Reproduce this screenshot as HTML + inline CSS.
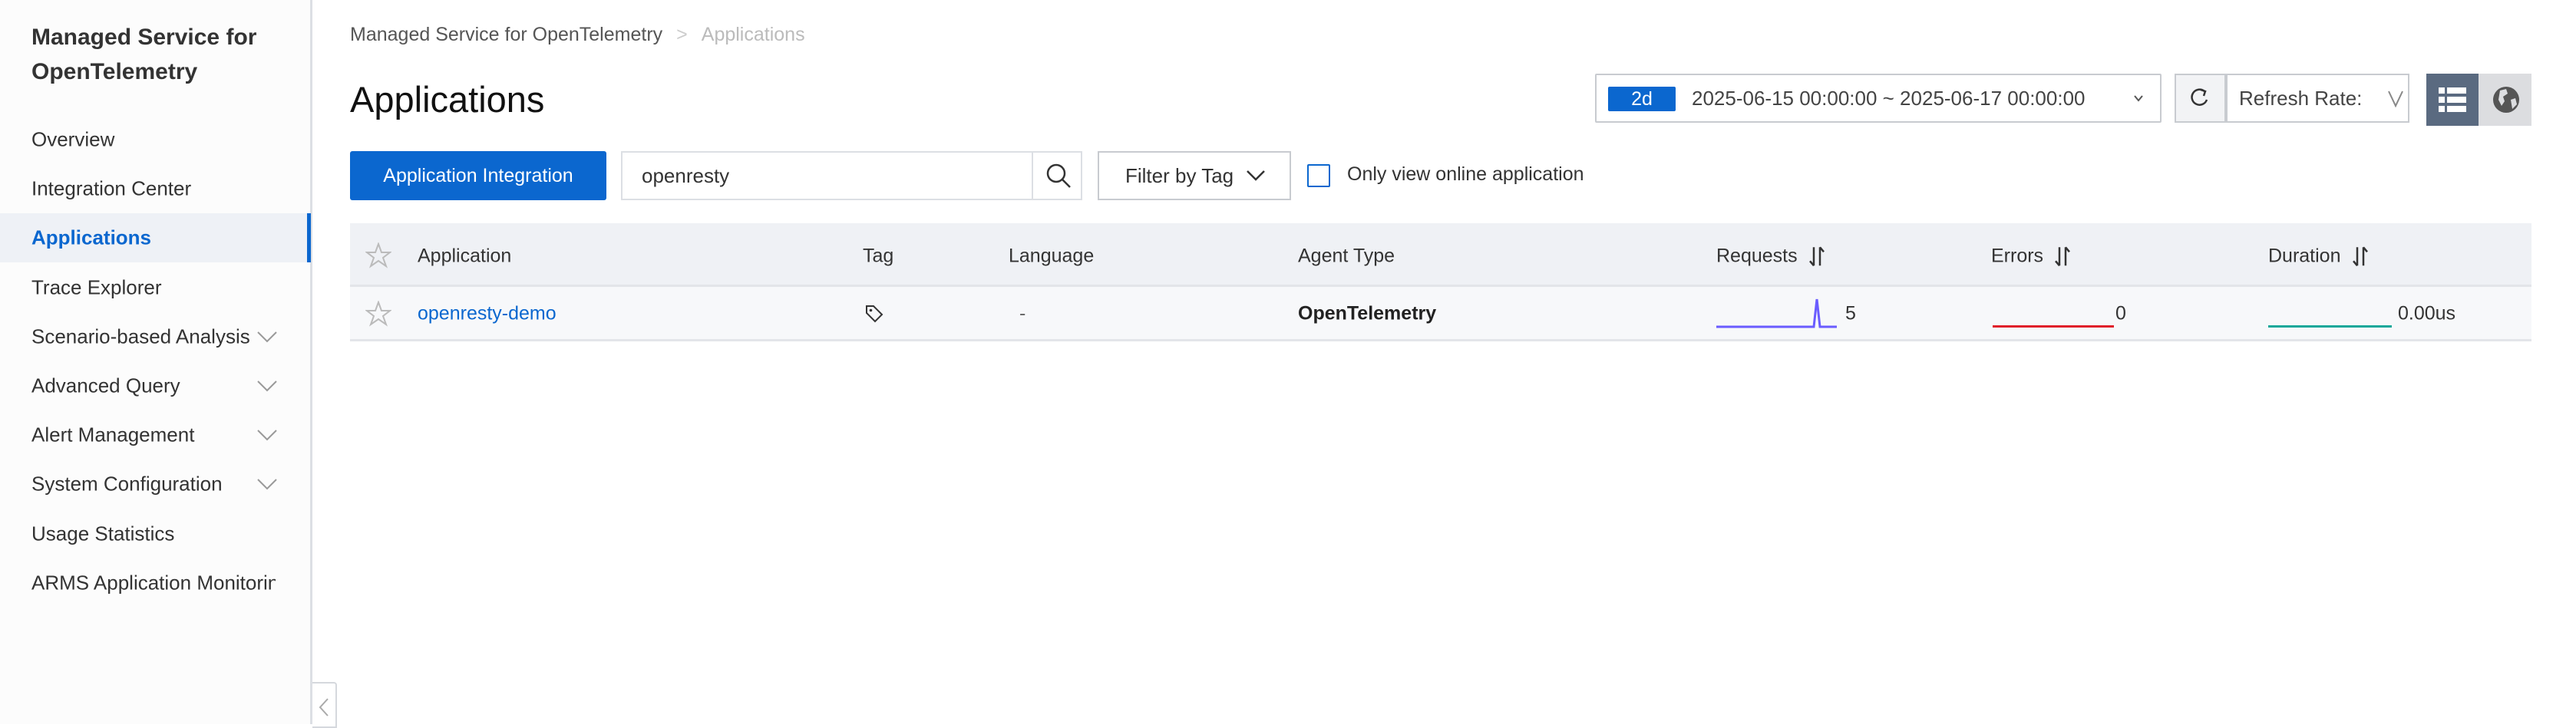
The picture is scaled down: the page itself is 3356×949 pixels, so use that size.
<!DOCTYPE html>
<html><head><meta charset="utf-8"><style>
*{box-sizing:border-box;margin:0;padding:0}
body{width:3356px;height:944px;overflow:hidden;background:#fff;font-family:"Liberation Sans",Arial,sans-serif;color:#333;position:relative}
.abs{position:absolute}
#side{left:0;top:0;width:407px;height:944px;background:#fcfcfc;border-right:3px solid #dcdfe4}
.ttl{left:41px;font-size:30px;font-weight:bold;color:#333;white-space:nowrap}
.mi{left:41px;font-size:26px;color:#333;white-space:nowrap;transform:translateY(-50%)}
.chev{left:333px;width:30px;height:18px}
.hd{font-size:25px;color:#333;transform:translateY(-50%);white-space:nowrap}
.sort{display:inline-block;margin-left:14px;vertical-align:middle}
</style></head><body>
<div id="side" class="abs"></div>
<div class="abs ttl" style="top:32px">Managed Service for</div>
<div class="abs ttl" style="top:77px">OpenTelemetry</div>
<div class="abs" style="left:0;top:278px;width:404px;height:64px;background:#eef1f6"></div>
<div class="abs" style="left:400px;top:278px;width:5px;height:64px;background:#0b67cf"></div>
<div class="abs mi" style="top:182px">Overview</div>
<div class="abs mi" style="top:246px">Integration Center</div>
<div class="abs mi" style="top:310px;color:#0b67cf;font-weight:bold">Applications</div>
<div class="abs mi" style="top:375px">Trace Explorer</div>
<div class="abs mi" style="top:439px">Scenario-based Analysis</div>
<div class="abs mi" style="top:503px">Advanced Query</div>
<div class="abs mi" style="top:567px">Alert Management</div>
<div class="abs mi" style="top:631px">System Configuration</div>
<div class="abs mi" style="top:696px">Usage Statistics</div>
<div class="abs mi" style="top:760px;width:318px;overflow:hidden">ARMS Application Monitoring</div>
<svg class="abs chev" style="top:430px" viewBox="0 0 30 18"><path d="M3 3 L15 15 L27 3" fill="none" stroke="#999" stroke-width="2"/></svg>
<svg class="abs chev" style="top:494px" viewBox="0 0 30 18"><path d="M3 3 L15 15 L27 3" fill="none" stroke="#999" stroke-width="2"/></svg>
<svg class="abs chev" style="top:558px" viewBox="0 0 30 18"><path d="M3 3 L15 15 L27 3" fill="none" stroke="#999" stroke-width="2"/></svg>
<svg class="abs chev" style="top:622px" viewBox="0 0 30 18"><path d="M3 3 L15 15 L27 3" fill="none" stroke="#999" stroke-width="2"/></svg>
<div class="abs" style="left:407px;top:889px;width:32px;height:60px;border:2px solid #d5d8dd;border-left:none;border-radius:0 4px 0 0;background:#fff"></div>
<svg class="abs" style="left:413px;top:908px" width="18" height="28" viewBox="0 0 18 28"><path d="M14 3 L4 14 L14 25" fill="none" stroke="#aaa" stroke-width="2"/></svg>

<div class="abs" style="left:456px;top:31px;font-size:25px;color:#555;white-space:nowrap">Managed Service for OpenTelemetry<span style="color:#ccc;margin:0 18px">&gt;</span><span style="color:#bbb">Applications</span></div>
<div class="abs" style="left:456px;top:102px;font-size:47px;color:#111">Applications</div>

<div class="abs" style="left:456px;top:197px;width:334px;height:64px;background:#0b67cf;border-radius:3px;color:#fff;font-size:25px;line-height:64px;text-align:center">Application Integration</div>
<div class="abs" style="left:809px;top:197px;width:601px;height:64px;border:2px solid #dcdfe4;background:#fff"></div>
<div class="abs" style="left:836px;top:214px;font-size:26px;color:#333">openresty</div>
<div class="abs" style="left:1344px;top:197px;width:2px;height:64px;background:#dcdfe4"></div>
<svg class="abs" style="left:1361px;top:211px" width="36" height="36" viewBox="0 0 36 36"><circle cx="15" cy="15" r="11" fill="none" stroke="#333" stroke-width="2.5"/><path d="M23 23 L33 33" stroke="#333" stroke-width="2.5"/></svg>
<div class="abs" style="left:1430px;top:197px;width:252px;height:64px;border:2px solid #c8cbd0;background:#fff;font-size:26px;line-height:60px;padding-left:34px;color:#333">Filter by Tag</div>
<svg class="abs" style="left:1622px;top:220px" width="28" height="18" viewBox="0 0 28 18"><path d="M3 3 L14 14 L25 3" fill="none" stroke="#333" stroke-width="2.5"/></svg>
<div class="abs" style="left:1703px;top:214px;width:30px;height:30px;border:2px solid #0b67cf;border-radius:2px;background:#fff"></div>
<div class="abs" style="left:1755px;top:213px;font-size:25px;color:#333">Only view online application</div>

<div class="abs" style="left:2078px;top:96px;width:738px;height:64px;border:2px solid #c8cbd0;border-radius:2px;background:#fff"></div>
<div class="abs" style="left:2095px;top:113px;width:88px;height:32px;background:#0b67cf;border-radius:2px;color:#fff;font-size:25px;line-height:32px;text-align:center">2d</div>
<div class="abs" style="left:2204px;top:113px;font-size:26px;color:#444;white-space:nowrap">2025-06-15 00:00:00 ~ 2025-06-17 00:00:00</div>
<svg class="abs" style="left:2778px;top:122px" width="16" height="12" viewBox="0 0 16 12"><path d="M3 3 L8 9 L13 3" fill="none" stroke="#555" stroke-width="2"/></svg>
<div class="abs" style="left:2833px;top:96px;width:67px;height:64px;border:2px solid #c8cbd0;background:#f2f3f5"></div>
<svg class="abs" style="left:2852px;top:114px" width="28" height="28" viewBox="0 0 28 28"><path d="M20 5 A10 10 0 1 0 23 16" fill="none" stroke="#333" stroke-width="2.5"/><path d="M15 3 L21 5 L19 11" fill="none" stroke="#333" stroke-width="2.5"/></svg>
<div class="abs" style="left:2900px;top:96px;width:239px;height:64px;border:2px solid #c8cbd0;background:#fff;font-size:26px;line-height:60px;padding-left:15px;color:#444">Refresh Rate:</div>
<svg class="abs" style="left:3110px;top:116px" width="22" height="26" viewBox="0 0 22 26"><path d="M2 3 L11 22 L20 3" fill="none" stroke="#888" stroke-width="2"/></svg>
<div class="abs" style="left:3161px;top:96px;width:68px;height:68px;background:#5a6a80"></div>
<svg class="abs" style="left:3175px;top:112px" width="40" height="36" viewBox="0 0 40 36"><g fill="#fff"><rect x="2" y="2" width="8" height="8"/><rect x="13" y="2" width="25" height="8"/><rect x="2" y="14" width="8" height="8"/><rect x="13" y="14" width="25" height="8"/><rect x="2" y="26" width="8" height="8"/><rect x="13" y="26" width="25" height="8"/></g></svg>
<div class="abs" style="left:3229px;top:96px;width:69px;height:68px;background:#dcdde0"></div>
<svg class="abs" style="left:3245px;top:108px" width="40" height="44" viewBox="0 0 40 44"><circle cx="20" cy="22" r="17" fill="#555"/><path d="M12 10 L20 8 L22 14 L16 18 L18 24 L14 30 L10 22 Z M26 22 L32 20 L34 28 L28 34 Z" fill="#dcdde0"/></svg>

<div class="abs" style="left:456px;top:291px;width:2842px;height:83px;background:#eff1f5;border-bottom:3px solid #e3e5e9"></div>
<div class="abs" style="left:456px;top:374px;width:2842px;height:71px;background:#f7f8fa;border-bottom:3px solid #e3e5e9"></div>
<svg class="abs" style="left:476px;top:316px" width="34" height="34" viewBox="0 0 34 34"><path d="M17 2 L21 13 L32 13 L23 20 L27 31 L17 24 L7 31 L11 20 L2 13 L13 13 Z" fill="none" stroke="#bbb" stroke-width="2"/></svg>
<svg class="abs" style="left:476px;top:392px" width="34" height="34" viewBox="0 0 34 34"><path d="M17 2 L21 13 L32 13 L23 20 L27 31 L17 24 L7 31 L11 20 L2 13 L13 13 Z" fill="none" stroke="#bbb" stroke-width="2"/></svg>
<div class="abs hd" style="left:544px;top:334px">Application</div>
<div class="abs hd" style="left:1124px;top:334px">Tag</div>
<div class="abs hd" style="left:1314px;top:334px">Language</div>
<div class="abs hd" style="left:1691px;top:334px">Agent Type</div>
<div class="abs hd" style="left:2236px;top:334px">Requests<svg class="sort" width="22" height="28" viewBox="0 0 22 28"><path d="M7 2 V26 M7 26 L2 20 M15 26 V2 M15 2 L20 8" fill="none" stroke="#333" stroke-width="2.5"/></svg></div>
<div class="abs hd" style="left:2594px;top:334px">Errors<svg class="sort" width="22" height="28" viewBox="0 0 22 28"><path d="M7 2 V26 M7 26 L2 20 M15 26 V2 M15 2 L20 8" fill="none" stroke="#333" stroke-width="2.5"/></svg></div>
<div class="abs hd" style="left:2955px;top:334px">Duration<svg class="sort" width="22" height="28" viewBox="0 0 22 28"><path d="M7 2 V26 M7 26 L2 20 M15 26 V2 M15 2 L20 8" fill="none" stroke="#333" stroke-width="2.5"/></svg></div>

<div class="abs hd" style="left:544px;top:409px;color:#0b67cf">openresty-demo</div>
<svg class="abs" style="left:1126px;top:396px" width="26" height="26" viewBox="0 0 26 26"><path d="M3 3 H12 L23 14 L14 23 L3 12 Z" fill="none" stroke="#333" stroke-width="2"/><circle cx="8.5" cy="8.5" r="1.8" fill="#333"/></svg>
<div class="abs hd" style="left:1328px;top:409px;color:#666">-</div>
<div class="abs hd" style="left:1691px;top:409px;font-weight:bold;color:#222">OpenTelemetry</div>
<svg class="abs" style="left:2236px;top:388px" width="160" height="40" viewBox="0 0 160 40"><path d="M0 38 H127 L131 2 L135 38 H157" fill="none" stroke="#6a5cff" stroke-width="3"/></svg>
<div class="abs hd" style="left:2404px;top:409px">5</div>
<div class="abs" style="left:2596px;top:424px;width:158px;height:3px;background:#e0202a"></div>
<div class="abs hd" style="left:2756px;top:409px">0</div>
<div class="abs" style="left:2955px;top:424px;width:161px;height:3px;background:#17a89a"></div>
<div class="abs hd" style="left:3124px;top:409px">0.00us</div>
</body></html>
